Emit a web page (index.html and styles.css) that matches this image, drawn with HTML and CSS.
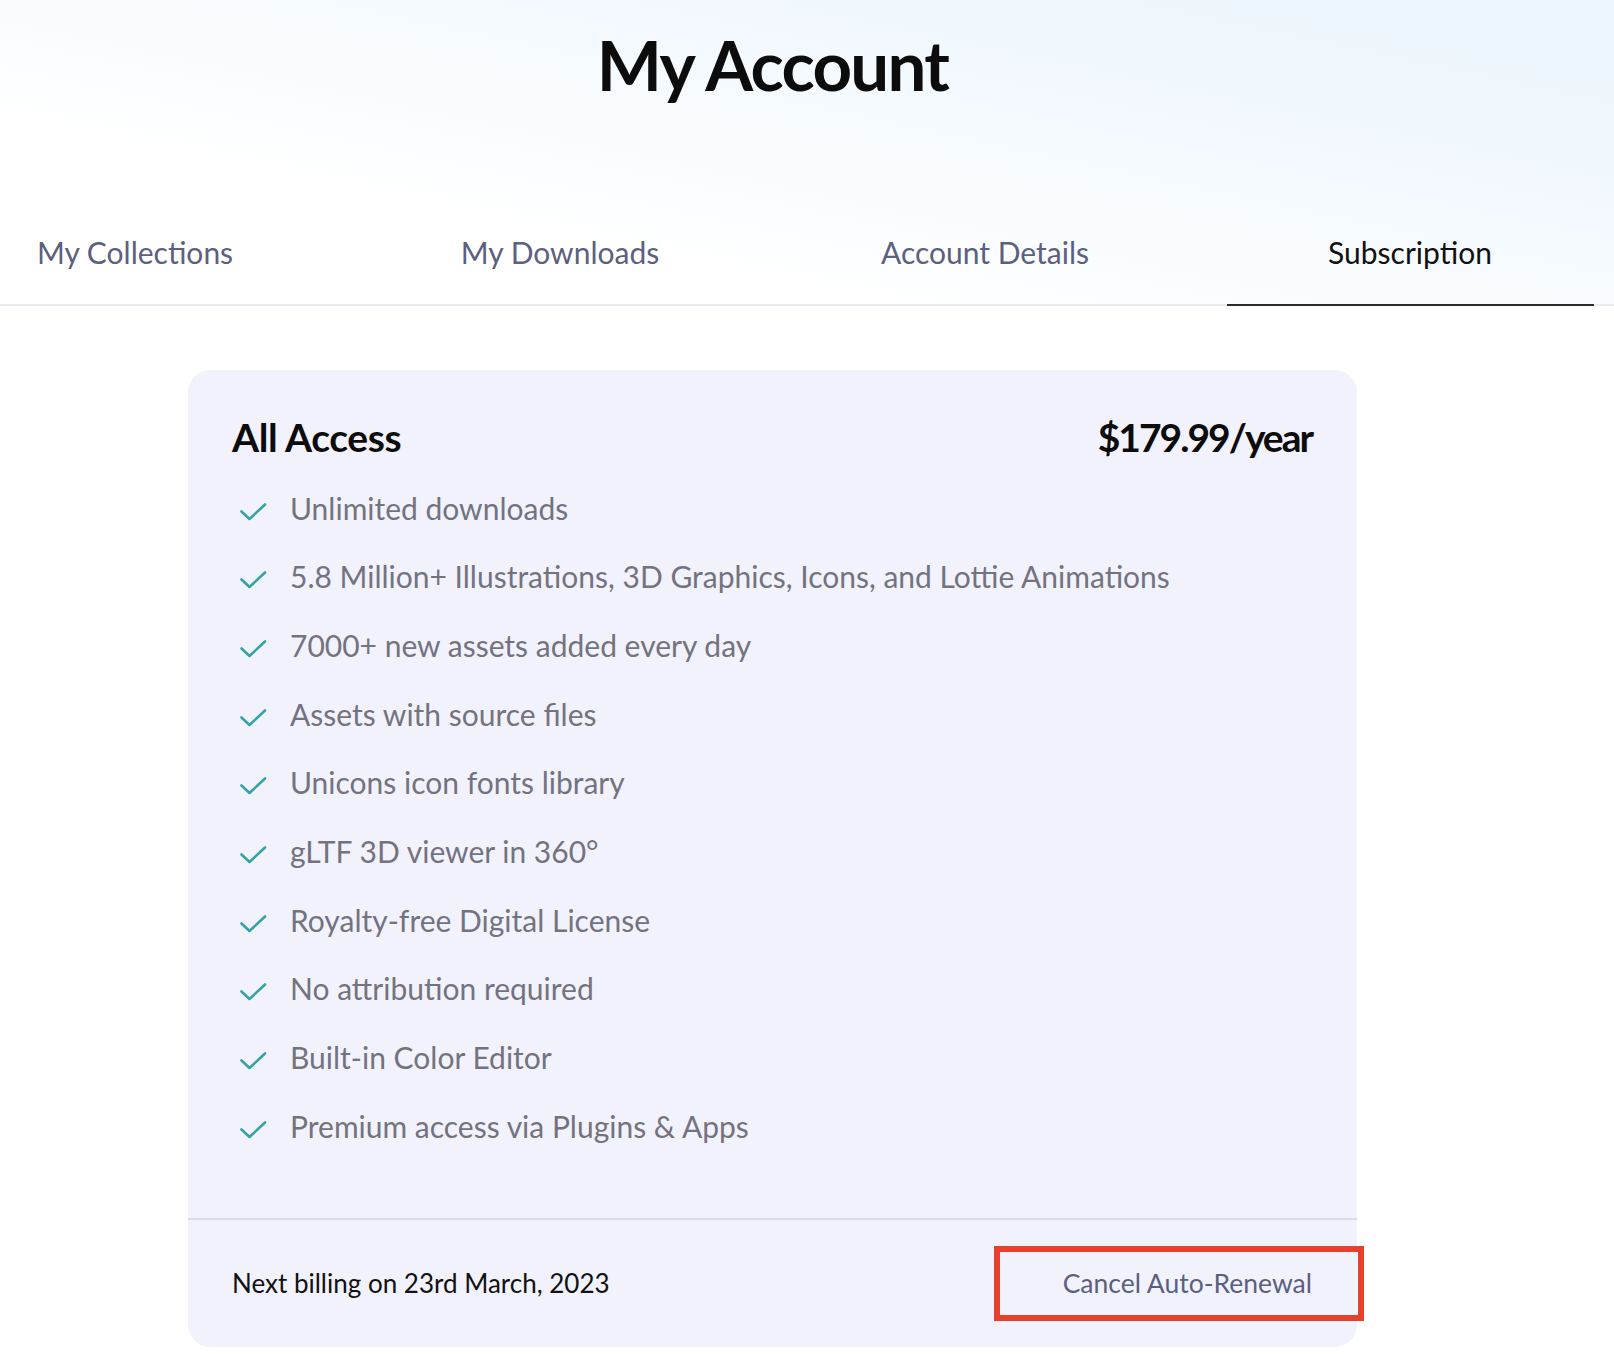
FILE: index.html
```html
<!DOCTYPE html>
<html lang="en">
<head>
  <meta charset="UTF-8" />
  <meta name="viewport" content="width=device-width, initial-scale=1.0"/>
  <title>My Account</title>
  <link rel="stylesheet" href="styles.css">
</head>
<body>
  <header class="hero">
    <div class="container">
      <h1>My Account</h1>
    </div>
    <nav class="tabs-bar">
      <div class="container tabs">
        <a class="tab" href="#">My Collections</a>
        <a class="tab" href="#">My Downloads</a>
        <a class="tab" href="#">Account Details</a>
        <a class="tab active" href="#">Subscription</a>
      </div>
    </nav>
  </header>

  <main class="container">
    <section class="plan-card">
      <div class="plan-body">
        <div class="plan-head">
          <h3>All Access</h3>
          <span class="price">$179.99/year</span>
        </div>
        <ul class="features">
          <li><svg class="check" viewBox="0 0 28 20"><polyline points="1.5,9.5 9.5,17 25,2.5"/></svg>Unlimited downloads</li>
          <li><svg class="check" viewBox="0 0 28 20"><polyline points="1.5,9.5 9.5,17 25,2.5"/></svg>5.8 Million+ Illustrations, 3D Graphics, Icons, and Lottie Animations</li>
          <li><svg class="check" viewBox="0 0 28 20"><polyline points="1.5,9.5 9.5,17 25,2.5"/></svg>7000+ new assets added every day</li>
          <li><svg class="check" viewBox="0 0 28 20"><polyline points="1.5,9.5 9.5,17 25,2.5"/></svg>Assets with source files</li>
          <li><svg class="check" viewBox="0 0 28 20"><polyline points="1.5,9.5 9.5,17 25,2.5"/></svg>Unicons icon fonts library</li>
          <li><svg class="check" viewBox="0 0 28 20"><polyline points="1.5,9.5 9.5,17 25,2.5"/></svg>gLTF 3D viewer in 360°</li>
          <li><svg class="check" viewBox="0 0 28 20"><polyline points="1.5,9.5 9.5,17 25,2.5"/></svg>Royalty-free Digital License</li>
          <li><svg class="check" viewBox="0 0 28 20"><polyline points="1.5,9.5 9.5,17 25,2.5"/></svg>No attribution required</li>
          <li><svg class="check" viewBox="0 0 28 20"><polyline points="1.5,9.5 9.5,17 25,2.5"/></svg>Built-in Color Editor</li>
          <li><svg class="check" viewBox="0 0 28 20"><polyline points="1.5,9.5 9.5,17 25,2.5"/></svg>Premium access via Plugins &amp; Apps</li>
        </ul>
      </div>
      <div class="plan-footer">
        <span class="billing">Next billing on 23rd March, 2023</span>
        <button class="cancel-btn" type="button">Cancel Auto-Renewal</button>
      </div>
    </section>
  </main>
</body>
</html>
```

FILE: styles.css
```css
body {
  font-family: Lato, "Open Sans", Arial, sans-serif;
  background-color: #ffffff;
  margin: 0;
  color: #111;
  overflow-x: hidden;
}

.container {
  width: 1545px;
}

.hero {
  background: linear-gradient(192deg, #ebf5fc 0%, #f3f9fe 35%, #ffffff 72%);
}

h1 {
  margin: 0;
  padding-top: 24px;
  font-size: 69px;
  line-height: 1.2;
  font-weight: 700;
  letter-spacing: -1.7px;
  text-align: center;
  color: #0c0c0c;
}

.tabs-bar {
  margin-top: 127px;
  border-bottom: 2px solid #ebebf2;
}

.tabs {
  display: flex;
  justify-content: center;
  gap: 58px;
}

.tab {
  flex: 0 0 367px;
  padding-bottom: 34px;
  margin-bottom: -2px;
  border-bottom: 2px solid transparent;
  font-size: 30px;
  line-height: 1.2;
  text-align: center;
  text-decoration: none;
  color: #5c6080;
}

.tab.active {
  color: #111;
  border-bottom-color: #2b2b2b;
}

.plan-card {
  width: 1169px;
  margin: 64px auto 0;
  background-color: #f2f2fd;
  border-radius: 22px;
}

.plan-body {
  padding: 44px 45px 74px 44px;
  border-bottom: 2px solid #dcdce6;
}

.plan-head {
  display: flex;
  justify-content: space-between;
  align-items: baseline;
}

.plan-head h3,
.plan-head .price {
  margin: 0;
  font-size: 39px;
  line-height: 1.2;
  font-weight: 700;
  color: #0c0c0c;
}

.plan-head h3 {
  letter-spacing: -0.4px;
}

.plan-head .price {
  letter-spacing: -2px;
}

.features {
  list-style: none;
  margin: 29px 0 0;
  padding: 0;
  display: flex;
  flex-direction: column;
  gap: 32.7px;
}

.features li {
  display: flex;
  align-items: center;
  font-size: 30px;
  line-height: 36px;
  color: #737380;
}

.check {
  width: 28px;
  height: 20px;
  margin: 8px 22px 0 8px;
  flex-shrink: 0;
}

.check polyline {
  fill: none;
  stroke: #35a3a6;
  stroke-width: 2.6;
  stroke-linecap: round;
  stroke-linejoin: round;
}

.plan-footer {
  height: 127px;
  padding: 0 45px 0 44px;
  display: flex;
  justify-content: space-between;
  align-items: center;
}

.billing {
  font-size: 26px;
  color: #111;
}

.cancel-btn {
  height: 75px;
  margin-right: -52px;
  padding: 0 46px 0 63px;
  border: 6px solid #e8412b;
  background: none;
  font-family: inherit;
  font-size: 26.5px;
  color: #5b5f7e;
  cursor: pointer;
}
```
